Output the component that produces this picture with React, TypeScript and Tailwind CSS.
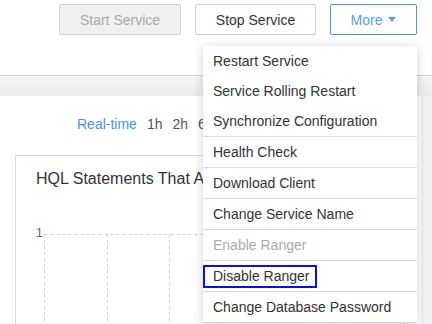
import React from 'react';

// menu entries of the "More" dropdown
const menuItems = [
  { label: 'Restart Service', divider: false },
  { label: 'Service Rolling Restart', divider: false },
  { label: 'Synchronize Configuration', divider: true },
  { label: 'Health Check', divider: true },
  { label: 'Download Client', divider: true },
  { label: 'Change Service Name', divider: true },
  { label: 'Enable Ranger', divider: true, disabled: true },
  { label: 'Disable Ranger', divider: true, focused: true },
  { label: 'Change Database Password', divider: true },
];

const ranges = ['1h', '2h', '6h'];

const ChartGrid = () => (
  <svg width="360" height="100" className="block">
    <line x1="0.5" y1="0.5" x2="360" y2="0.5" stroke="#cfcfcf" strokeDasharray="3 3" />
    {[0.5, 63.5, 125.5, 188.5, 251.5, 313.5].map((x) => (
      <line key={x} x1={x} y1="0" x2={x} y2="100" stroke="#cfcfcf" strokeDasharray="3 3" />
    ))}
  </svg>
);

const App = () => {
  return (
    <div className="relative w-[432px] h-[324px] overflow-hidden bg-[#eef0f3] font-['Liberation_Sans',Arial,sans-serif] text-[14px] text-[#333]">
      {/* header with action buttons */}
      <div className="h-[76px] bg-white border-b border-[#cfcfcf] flex justify-end items-start pt-[4px] pr-[15px]">
        <button className="w-[122px] h-[31px] bg-[#f0f0f0] border border-[#d0d0d0] rounded-[2px] text-[#aaa] leading-none">
          Start Service
        </button>
        <button className="ml-[14px] w-[121px] h-[31px] bg-white border border-[#cfcfcf] rounded-[2px] text-[#333] leading-none">
          Stop Service
        </button>
        <button className="ml-[14px] w-[87px] h-[31px] bg-white border border-[#4a94f0] rounded-[2px] text-[#5a9cf6] leading-none flex items-center justify-center gap-[6px]">
          <span>More</span>
          <svg width="8" height="5" viewBox="0 0 8 5">
            <path d="M0 0h8L4 5z" fill="#5a9cf6" />
          </svg>
        </button>
      </div>

      <div className="h-[20px] bg-gradient-to-b from-[#f5f6f8] to-[#eaebed]" />

      {/* main panel */}
      <div className="w-[421px] h-[228px] bg-white">
        <div className="flex items-center gap-[10px] pl-[77px] pt-[18px] leading-[20px]">
          <span className="text-[#4a92f2]">Real-time</span>
          {ranges.map((r) => (
            <span key={r} className="text-[#555]">
              {r}
            </span>
          ))}
        </div>

        <div className="ml-[15px] mt-[21px] w-[390px] h-[200px] border border-[#dcdcdc]">
          <div className="pl-[20px] pt-[13px] text-[16px] leading-[20px] text-[#333] whitespace-nowrap">
            HQL Statements That Are Being Executed
          </div>
          <div className="flex mt-[37px] pl-[20px]">
            <span className="w-[14px] text-[12px] leading-[14px] text-[#666]">1</span>
            <div className="pt-[8px]">
              <ChartGrid />
            </div>
          </div>
        </div>
      </div>

      {/* dropdown menu */}
      <div className="absolute left-[203px] top-[46px] w-[214px] bg-white shadow-[0_2px_10px_rgba(0,0,0,0.18)]">
        {menuItems.map((item) => (
          <div
            key={item.label}
            className={`flex items-center whitespace-nowrap ${
              item.divider ? 'h-[31px] border-b border-[#d9d9d9]' : 'h-[30px]'
            } ${item.disabled ? 'text-[#aaa]' : 'text-[#333]'}`}
          >
            {item.focused ? (
              <span className="border-2 border-[#0010f0] pl-[8px] pr-[5px] py-[1px] leading-[17px]">
                {item.label}
              </span>
            ) : (
              <span className="pl-[10px]">{item.label}</span>
            )}
          </div>
        ))}
      </div>
    </div>
  );
};

export default App;
